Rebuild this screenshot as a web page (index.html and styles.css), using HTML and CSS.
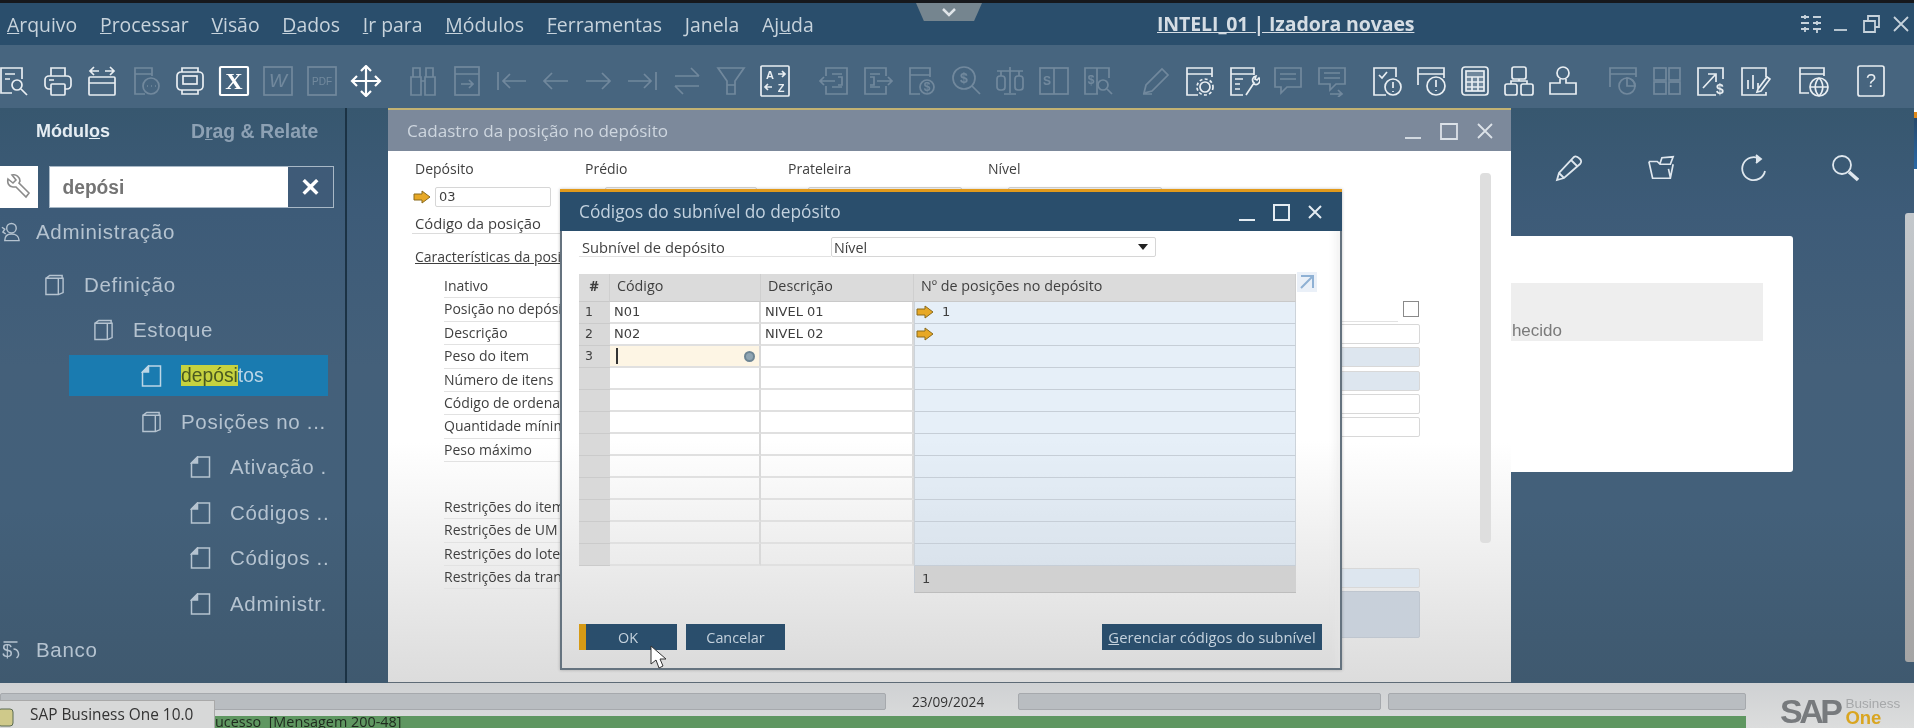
FILE: index.html
```html
<!DOCTYPE html>
<html lang="pt">
<head>
<meta charset="utf-8">
<title>SAP Business One</title>
<link rel="stylesheet" href="styles.css">
</head>
<body>
<svg class="defs" width="0" height="0" aria-hidden="true">
<defs>
<symbol id="docsearch" viewBox="0 0 32 32"><path d="M24 14V3H3v25h11M7 9h10M7 14h5"/><circle cx="19" cy="20" r="5"/><path d="M23 24l6 6"/></symbol>
<symbol id="print" viewBox="0 0 32 32"><path d="M9 11V3h14v8M9 24H7a4 4 0 0 1-4-4v-5a4 4 0 0 1 4-4h18a4 4 0 0 1 4 4v5a4 4 0 0 1-4 4h-2M7 15h5"/><rect x="9" y="19" width="14" height="11" rx="1"/></symbol>
<symbol id="calarrows" viewBox="0 0 32 32"><rect x="3" y="12" width="26" height="18" rx="1"/><path d="M3 18h26M4 6h9M8 2L4 6l4 4M28 6h-9M24 2l4 4-4 4"/></symbol>
<symbol id="docchat" viewBox="0 0 32 32"><path d="M22 11V3H5v26h10M5 9h17"/><circle cx="21" cy="21" r="8"/><path d="M17 21h1M21 21h1M25 21h1"/></symbol>
<symbol id="screen" viewBox="0 0 32 32"><rect x="3" y="7" width="26" height="18" rx="4"/><rect x="9" y="11" width="14" height="8"/><path d="M8 7V3h16v4M8 25v4h16v-4"/></symbol>
<symbol id="excel" viewBox="0 0 32 32"><rect x="2" y="2" width="28" height="28" rx="1"/><text x="16" y="24" class="st st-x">X</text></symbol>
<symbol id="word" viewBox="0 0 32 32"><rect x="2" y="2" width="28" height="28"/><text x="16" y="22" class="st st-w">W</text></symbol>
<symbol id="pdf" viewBox="0 0 32 32"><rect x="2" y="2" width="28" height="28"/><text x="16" y="20" class="st st-p">PDF</text></symbol>
<symbol id="move" viewBox="0 0 32 32"><path d="M16 1v30M2 16h28M11 6l5-5 5 5M11 26l5 5 5-5M7 11l-5 5 5 5M25 11l5 5-5 5"/></symbol>
<symbol id="binoc" viewBox="0 0 32 32"><path d="M6 3h7v9H6zM19 3h7v9h-7zM4 12h10v18H4zM18 12h10v18H18zM14 16h4"/></symbol>
<symbol id="docarrow" viewBox="0 0 32 32"><rect x="4" y="2" width="24" height="28"/><path d="M4 9h24M10 19h12M18 15l4 4-4 4"/></symbol>
<symbol id="first" viewBox="0 0 32 32"><path d="M3 7v18M8 16h23M15 9l-7 7 7 7"/></symbol>
<symbol id="prev" viewBox="0 0 32 32"><path d="M5 16h24M13 8l-8 8 8 8"/></symbol>
<symbol id="next" viewBox="0 0 32 32"><path d="M3 16h24M19 8l8 8-8 8"/></symbol>
<symbol id="last" viewBox="0 0 32 32"><path d="M29 7v18M1 16h23M17 9l7 7-7 7"/></symbol>
<symbol id="swap" viewBox="0 0 32 32"><path d="M4 11h24M20 3l8 8M28 21H4M12 29l-8-8"/></symbol>
<symbol id="funnel" viewBox="0 0 32 32"><path d="M3 3h26l-9 13v13h-8V16zM12 20h8"/></symbol>
<symbol id="sortaz" viewBox="0 0 32 32"><rect x="2" y="1" width="28" height="30" rx="1"/><text x="11" y="14" class="st st-s">A</text><text x="22" y="27" class="st st-s">Z</text><path d="M19 9h7M23 6l3 3-3 3M13 22H6M9 19l-3 3 3 3"/></symbol>
<symbol id="docleft" viewBox="0 0 32 32"><path d="M8 11V3h21v26H8v-8M14 9h10M14 22h10M2 16h15M6 12l-4 4 4 4M20 12h4v8h-4"/></symbol>
<symbol id="docright" viewBox="0 0 32 32"><path d="M24 11V3H3v26h21v-8M8 9h10M8 22h10M15 16h15M26 12l4 4-4 4M8 12h4v8H8"/></symbol>
<symbol id="docdollar" viewBox="0 0 32 32"><path d="M24 12V3H4v26h10M4 10h20"/><circle cx="21" cy="22" r="7"/><text x="21" y="26" class="st st-d">$</text></symbol>
<symbol id="coinsearch" viewBox="0 0 32 32"><circle cx="14" cy="13" r="11"/><text x="14" y="18" class="st st-c">$</text><path d="M22 21l8 8"/></symbol>
<symbol id="scales" viewBox="0 0 32 32"><path d="M3 6h26M16 2v26M10 29h12M7 6v5M25 6v5"/><rect x="3" y="11" width="8" height="14" rx="3"/><rect x="21" y="11" width="8" height="14" rx="3"/></symbol>
<symbol id="sdoc" viewBox="0 0 32 32"><rect x="2" y="3" width="28" height="26"/><path d="M16 3v26"/><text x="9" y="20" class="st st-c2">S</text></symbol>
<symbol id="ssearch" viewBox="0 0 32 32"><path d="M27 13V3H3v26h13M15 3v26"/><text x="9" y="19" class="st st-c2">$</text><circle cx="21" cy="20" r="5"/><path d="M25 24l5 5"/></symbol>
<symbol id="pencil" viewBox="0 0 32 32"><path d="M3 29h9M4 28l2-8L22 4l6 6-16 16z"/></symbol>
<symbol id="pencil2" viewBox="0 0 28 28"><path d="M2 26l2-7L19 3c2-2 5 1 6 2s2 3 0 5L9 24zM16 6l6 6M4 19l5 5"/></symbol>
<symbol id="calgear" viewBox="0 0 32 32"><path d="M28 12V3H3v27h11M3 9h25"/><circle cx="21" cy="22" r="5"/><circle cx="21" cy="22" r="8" stroke-dasharray="3 2.3"/></symbol>
<symbol id="docwrench" viewBox="0 0 32 32"><path d="M26 10V3H3v27h12M3 9h23M7 14h8M7 19h5M7 24h5M18 30l8-12a4 4 0 0 1 2-7l-1 3 2 1 2-2a4 4 0 0 1-5 6"/></symbol>
<symbol id="chat" viewBox="0 0 32 32"><path d="M3 3h26v19H15l-6 6v-6H3zM8 9h16M8 14h16"/></symbol>
<symbol id="chat2" viewBox="0 0 32 32"><path d="M3 3h26v16h-9l-6 6v-6H3zM8 8h16M8 13h16M14 29h12M22 25l4 4-4 3"/></symbol>
<symbol id="doccheck" viewBox="0 0 32 32"><path d="M25 12V3H3v27h12M8 10l3 3 5-6"/><circle cx="22" cy="22" r="8"/><path d="M22 17v6M22 26v1"/></symbol>
<symbol id="calalert" viewBox="0 0 32 32"><path d="M3 20V3h26v10M3 9h26"/><circle cx="21" cy="21" r="9"/><path d="M21 15v7M21 25v1"/></symbol>
<symbol id="calc" viewBox="0 0 32 32"><rect x="3" y="2" width="26" height="28" rx="3"/><rect x="7" y="6" width="18" height="20" fill="currentColor" fill-opacity=".25"/><path d="M7 12h18M7 17h18M7 22h18M13 12v14M19 12v14"/></symbol>
<symbol id="hier" viewBox="0 0 32 32"><rect x="9" y="2" width="14" height="12" rx="2"/><rect x="2" y="19" width="12" height="11" rx="2"/><rect x="18" y="19" width="12" height="11" rx="2"/><path d="M16 14v2H8v3M16 16h8v3"/></symbol>
<symbol id="stamp" viewBox="0 0 32 32"><circle cx="16" cy="8" r="6"/><path d="M13 14v4H3v11h26V18H19v-4"/></symbol>
<symbol id="calcircle" viewBox="0 0 32 32"><path d="M3 22V3h26v9M3 9h26"/><circle cx="20" cy="21" r="8"/><path d="M20 13a8 8 0 0 1 8 8h-8z"/></symbol>
<symbol id="grid4" viewBox="0 0 32 32"><rect x="3" y="3" width="12" height="12"/><rect x="18" y="3" width="11" height="12"/><rect x="3" y="17" width="12" height="12"/><rect x="18" y="17" width="11" height="12"/></symbol>
<symbol id="arrowdollar" viewBox="0 0 32 32"><path d="M28 14V3H3v27h18M8 23L20 10M13 9h8v8"/><text x="25" y="29" class="st st-d2">$</text></symbol>
<symbol id="chartpen" viewBox="0 0 32 32"><path d="M27 12V3H3v27h24v-3M9 24v-9M14 24V10M19 24v-6M19 24l9-12 3 2-9 12-4 1z"/></symbol>
<symbol id="calglobe" viewBox="0 0 32 32"><path d="M27 11V3H3v25h9M3 9h24"/><circle cx="22" cy="22" r="9"/><path d="M13 22h18M22 13c-5 5-5 13 0 18M22 13c5 5 5 13 0 18"/></symbol>
<symbol id="help" viewBox="0 0 32 32"><rect x="3" y="1" width="26" height="30" rx="2"/><text x="16" y="22" class="st st-h">?</text></symbol>
<symbol id="leaf" viewBox="0 0 20 22"><path d="M7 1h12v20H1V7z"/><path d="M7 1v6H1z" fill="currentColor"/></symbol>
<symbol id="book" viewBox="0 0 22 22"><path d="M2 4l4-3h13v3M2 4h13v17H2zM15 4h5v15l-5 2"/></symbol>
<symbol id="adminico" viewBox="0 0 22 22"><circle cx="12" cy="7" r="5"/><path d="M2 6l3 2-2 3 3 2M5 20c0-5 3-7 7-7s8 2 8 7z"/></symbol>
<symbol id="bankico" viewBox="0 0 18 22"><text x="6" y="18" class="st st-b">$</text><path d="M2 3h14M12 10a5 5 0 0 1 3 9"/></symbol>
<symbol id="arrow" viewBox="0 0 18 14"><path d="M1 4h8V1l8 6-8 6v-3H1z" fill="#e7a826" stroke="#8a6a1c" stroke-width="1"/></symbol>
<symbol id="wrench" viewBox="0 0 26 26"><path d="M2 5l5 4 3-3-4-5c4-1 8 2 8 6l-1 2 10 10-3 4-10-10-3 0C3 13 1 9 2 5z"/></symbol>
<symbol id="folderopen" viewBox="0 0 30 28"><path d="M2 7h9l3 3h11l3-8-12 1-2 6M2 7l4 18h19l3-15M23 15l2 9"/></symbol>
<symbol id="refresh" viewBox="0 0 28 28"><path d="M21 5a11.500 11.500 0 1 0 5 12"/><path d="M17 1l5 4-5 4" fill="currentColor"/></symbol>
<symbol id="glass" viewBox="0 0 28 28"><circle cx="11" cy="11" r="9"/><path d="M18 18l9 8" stroke-width="3.500"/></symbol>
<symbol id="cursor" viewBox="0 0 18 25"><path d="M1 1v18l5-4 3 8 4-2-3-7h6z" fill="#fff" stroke="#333" stroke-width="1"/></symbol>
</defs>
</svg>

<div class="page">
<div class="app">
  <div class="blackbar"></div>
  <header class="menubar">
    <nav class="menus">
      <span><u>A</u>rquivo</span><span><u>P</u>rocessar</span><span><u>V</u>isão</span><span><u>D</u>ados</span><span><u>I</u>r para</span><span><u>M</u>ódulos</span><span><u>F</u>erramentas</span><span><u>J</u>anela</span><span>Aj<u>u</u>da</span>
    </nav>
    <div class="company">INTELI_01 | Izadora novaes</div>
    <div class="appctl">
      <svg class="ctl" viewBox="0 0 22 20"><path d="M1 3h8M1 9h8M1 15h8M13 3h8M13 9h8M13 15h8M5 1v4M5 13v5M17 7v4M17 15v4"/></svg>
      <svg class="ctl" viewBox="0 0 22 20"><path d="M4 16h13"/></svg>
      <svg class="ctl" viewBox="0 0 22 20"><path d="M4 7h11v11H4zM8 7V2h11v11h-4"/></svg>
      <svg class="ctl" viewBox="0 0 22 20"><path d="M4 3l14 14M18 3L4 17"/></svg>
    </div>
    <div class="notch"><svg viewBox="0 0 16 10"><path d="M2 2l6 6 6-6"/></svg></div>
  </header>

  <div class="toolbar">
    <div class="tgroup">
      <svg class="ti"><use href="#docsearch"/></svg><svg class="ti"><use href="#print"/></svg><svg class="ti"><use href="#calarrows"/></svg><svg class="ti dim"><use href="#docchat"/></svg><svg class="ti"><use href="#screen"/></svg><svg class="ti hi"><use href="#excel"/></svg><svg class="ti dim"><use href="#word"/></svg><svg class="ti dim"><use href="#pdf"/></svg><svg class="ti hi"><use href="#move"/></svg>
    </div>
    <div class="tgroup g2">
      <svg class="ti dim"><use href="#binoc"/></svg><svg class="ti dim"><use href="#docarrow"/></svg><svg class="ti dim"><use href="#first"/></svg><svg class="ti dim"><use href="#prev"/></svg><svg class="ti dim"><use href="#next"/></svg><svg class="ti dim"><use href="#last"/></svg><svg class="ti dim"><use href="#swap"/></svg><svg class="ti dim"><use href="#funnel"/></svg><svg class="ti"><use href="#sortaz"/></svg>
    </div>
    <div class="tgroup g3">
      <svg class="ti dim"><use href="#docleft"/></svg><svg class="ti dim"><use href="#docright"/></svg><svg class="ti dim"><use href="#docdollar"/></svg><svg class="ti dim"><use href="#coinsearch"/></svg><svg class="ti dim"><use href="#scales"/></svg><svg class="ti dim"><use href="#sdoc"/></svg><svg class="ti dim"><use href="#ssearch"/></svg>
    </div>
    <div class="tgroup g4">
      <svg class="ti dim"><use href="#pencil"/></svg><svg class="ti"><use href="#calgear"/></svg><svg class="ti"><use href="#docwrench"/></svg><svg class="ti dim"><use href="#chat"/></svg><svg class="ti dim"><use href="#chat2"/></svg>
    </div>
    <div class="tgroup g5">
      <svg class="ti"><use href="#doccheck"/></svg><svg class="ti"><use href="#calalert"/></svg><svg class="ti"><use href="#calc"/></svg><svg class="ti"><use href="#hier"/></svg><svg class="ti"><use href="#stamp"/></svg>
    </div>
    <div class="tgroup g6">
      <svg class="ti dim"><use href="#calcircle"/></svg><svg class="ti dim"><use href="#grid4"/></svg><svg class="ti"><use href="#arrowdollar"/></svg><svg class="ti"><use href="#chartpen"/></svg>
    </div>
    <div class="tgroup g7"><svg class="ti"><use href="#calglobe"/></svg></div>
    <div class="tgroup g7"><svg class="ti"><use href="#help"/></svg></div>
  </div>

  <div class="main">
    <aside class="sidebar">
      <div class="tabs"><span class="tab-on">Módul<u>o</u>s</span><span class="tab-off">D<u>r</u>ag &amp; Relate</span></div>
      <div class="searchrow">
        <div class="wrenchbox"><svg><use href="#wrench"/></svg></div>
        <div class="searchbox"><span class="searchtext">depósi</span><span class="searchx">✕</span></div>
      </div>
      <ul class="tree">
        <li class="node l0 first"><svg class="nico"><use href="#adminico"/></svg><span>Administração</span></li>
        <li class="node l1"><svg class="nico"><use href="#book"/></svg><span>Definição</span></li>
        <li class="node l2"><svg class="nico"><use href="#book"/></svg><span>Estoque</span></li>
        <li class="node l3 sel"><svg class="nico"><use href="#leaf"/></svg><span><mark>depósi</mark>tos</span></li>
        <li class="node l3"><svg class="nico"><use href="#book"/></svg><span>Posições no ...</span></li>
        <li class="node l4"><svg class="nico"><use href="#leaf"/></svg><span>Ativação .</span></li>
        <li class="node l4"><svg class="nico"><use href="#leaf"/></svg><span>Códigos ..</span></li>
        <li class="node l4"><svg class="nico"><use href="#leaf"/></svg><span>Códigos ..</span></li>
        <li class="node l4"><svg class="nico"><use href="#leaf"/></svg><span>Administr.</span></li>
        <li class="node l0"><svg class="nico"><use href="#bankico"/></svg><span>Banco</span></li>
      </ul>
    </aside>
    <div class="divider"></div>
    <div class="workspace">
      <div class="tools">
        <svg><use href="#pencil2"/></svg><svg><use href="#folderopen"/></svg><svg><use href="#refresh"/></svg><svg><use href="#glass"/></svg>
      </div>
      <div class="card"><div class="band"><span>Desconhecido</span></div></div>
      <div class="mainscroll"></div>

      <section class="win">
        <div class="wintitle">
          <span>Cadastro da posição no depósito</span>
          <div class="winctl">
            <svg viewBox="0 0 20 20"><path d="M2 17h16"/></svg>
            <svg viewBox="0 0 20 20"><path d="M2 3h16v15H2z"/></svg>
            <svg viewBox="0 0 20 20"><path d="M3 3l14 14M17 3L3 17"/></svg>
          </div>
        </div>
        <div class="winbody">
          <div class="headgrid">
            <span>Depósito</span><span>Prédio</span><span>Prateleira</span><span>Nível</span>
            <div class="hcell"><svg class="arrow"><use href="#arrow"/></svg><div class="field w116">03</div></div>
            <div class="hcell"><div class="field w152"></div></div>
            <div class="hcell"><div class="field w154"></div></div>
            <div class="hcell"><div class="field w154"></div></div>
          </div>
          <div class="codrow">Código da posição</div>
          <div class="charrow">Características da posição</div>
          <div class="rows">
            <div class="row"><span>Inativo</span></div>
            <div class="row line"><span>Posição no depósito</span><div class="check"></div></div>
            <div class="row"><span>Descrição</span><div class="val"></div></div>
            <div class="row"><span>Peso do item</span><div class="val blue"></div></div>
            <div class="row"><span>Número de itens</span><div class="val blue"></div></div>
            <div class="row"><span>Código de ordenação</span><div class="val"></div></div>
            <div class="row"><span>Quantidade mínima</span><div class="val"></div></div>
            <div class="row"><span>Peso máximo</span></div>
            <div class="rowgap"></div>
            <div class="row"><span>Restrições do item</span></div>
            <div class="row"><span>Restrições de UM</span></div>
            <div class="row"><span>Restrições do lote</span></div>
            <div class="row"><span>Restrições da transação</span><div class="val blue"></div></div>
            <div class="area"></div>
          </div>
          <div class="winscroll"></div>
        </div>
      </section>

      <section class="dlg">
        <div class="dlgtitle">
          <span>Códigos do subnível do depósito</span>
          <div class="dlgctl">
            <svg viewBox="0 0 20 20"><path d="M2 18h16"/></svg>
            <svg viewBox="0 0 20 20"><path d="M3 3h15v15H3z"/></svg>
            <svg viewBox="0 0 20 20"><path d="M4 4l12 12M16 4L4 16"/></svg>
          </div>
        </div>
        <div class="dlgbody">
          <div class="subrow"><span class="sublabel">Subnível de depósito</span><div class="select"><span>Nível</span><i class="caret"></i></div></div>
          <div class="gridwrap">
            <div class="grid">
              <div class="hd ctr">#</div><div class="hd">Código</div><div class="hd">Descrição</div><div class="hd">Nº de posições no depósito</div>
              <div class="num">1</div><div class="c">N01</div><div class="c">NIVEL 01</div><div class="c b"><svg class="arrow inrow"><use href="#arrow"/></svg>1</div>
              <div class="num">2</div><div class="c">N02</div><div class="c">NIVEL 02</div><div class="c b"><svg class="arrow inrow"><use href="#arrow"/></svg></div>
              <div class="num">3</div><div class="c active"><i class="textcaret"></i><i class="lookup"></i></div><div class="c"></div><div class="c b"></div>
              <div class="num"></div><div class="c"></div><div class="c"></div><div class="c b"></div>
              <div class="num"></div><div class="c"></div><div class="c"></div><div class="c b"></div>
              <div class="num"></div><div class="c"></div><div class="c"></div><div class="c b"></div>
              <div class="num"></div><div class="c"></div><div class="c"></div><div class="c b"></div>
              <div class="num"></div><div class="c"></div><div class="c"></div><div class="c b"></div>
              <div class="num"></div><div class="c"></div><div class="c"></div><div class="c b"></div>
              <div class="num"></div><div class="c"></div><div class="c"></div><div class="c b"></div>
              <div class="num"></div><div class="c"></div><div class="c"></div><div class="c b"></div>
              <div class="num"></div><div class="c"></div><div class="c"></div><div class="c b"></div>
              <div class="foot">1</div>
            </div>
            <svg class="expand" viewBox="0 0 20 20"><path d="M4 4h12v12M16 4L4 16"/></svg>
          </div>
          <div class="btnrow">
            <button class="btn ok">OK</button>
            <button class="btn cancel">Cancelar</button>
            <button class="btn manage"><u>G</u>erenciar códigos do subnível</button>
          </div>
          <svg class="cursor"><use href="#cursor"/></svg>
        </div>
      </section>
    </div>
  </div>

  <footer class="status">
    <div class="statusleft">
      <div class="fields">
        <div class="sf s1"></div><div class="date">23/09/2024</div><div class="sf s2"></div><div class="sf s3"></div>
      </div>
      <div class="greenbar">ucesso&nbsp; [Mensagem 200-48]</div>
    </div>
    <div class="logo"><span class="sap">SAP</span><div class="bo"><span>Business</span><b>One</b></div></div>
    <div class="taskbtn"><svg viewBox="0 0 16 20"><rect x="-2" y="2" width="15" height="17" rx="3" fill="#cfc98a" stroke="#5a6a50"/></svg><span>SAP Business One 10.0</span></div>
  </footer>
</div>
<div class="edge"><i></i></div>
</div>
</body>
</html>
```

FILE: styles.css
```css
* { box-sizing: border-box; }
html, body { margin: 0; height: 100%; overflow: hidden; background: #fff; }
body { font-family: "Open Sans", sans-serif; }
.defs { position: absolute; }
svg { fill: none; stroke: currentColor; stroke-width: 1.8; display: block; }
.st { stroke: none; fill: currentColor; text-anchor: middle; font-family: "Liberation Sans", sans-serif; font-weight: 700; }
.st-x { font-family: "Liberation Serif", serif; font-size: 24px; }
.st-w { font-size: 19px; font-style: italic; font-weight: 400; }
.st-p { font-size: 10px; font-weight: 400; }
.st-s { font-size: 11px; }
.st-d { font-size: 12px; }
.st-c { font-size: 14px; }
.st-c2 { font-size: 12px; }
.st-d2 { font-size: 14px; }
.st-h { font-size: 18px; font-weight: 400; }
.st-b { font-size: 18px; font-weight: 400; }

.page { display: flex; width: 1919px; height: 728px; filter: blur(.45px); }
.app { width: 1914px; height: 728px; display: flex; flex-direction: column; position: relative; }
.edge { width: 5px; background: #fff; }
.edge i { display: block; height: 57px; margin-top: 112px; background: linear-gradient(#e08a1a 0 6px, #27496b 6px, #2a6aa8 100%); width: 3px; }

.blackbar { height: 3px; flex: none; background: #16181c; }
.menubar { height: 42px; flex: none; background: #2a4e6c; display: grid; grid-template-columns: 1157px auto 1fr; align-items: center; color: #c7d3dc; position: relative; }
.menus { display: flex; gap: 22.8px; padding-left: 7px; font-size: 19.4px; }
.company { font-size: 19.5px; font-weight: 700; color: #d5dde4; text-decoration: underline; padding-bottom: 2px; letter-spacing: -.1px; }
.appctl { display: flex; justify-content: flex-end; gap: 8px; padding-right: 2px; color: #c6d2db; }
.ctl { width: 22px; height: 20px; }
.notch { position: absolute; left: 916px; top: 0; width: 66px; height: 18px; background: #75858f; clip-path: polygon(0 0, 100% 0, 88% 100%, 12% 100%); display: flex; justify-content: center; align-items: center; color: #dfe4e8; }
.notch svg { width: 16px; height: 10px; stroke-width: 2.5; }

.toolbar { height: 63px; flex: none; background: #47657f; display: flex; align-items: center; padding-top: 9px; margin-left: -8px; color: #e9eef2; }
.tgroup { display: flex; flex: none; }
.g2 { margin-left: 13px; }
.g3 { margin-left: 15px; }
.g4 { margin-left: 14px; }
.g5 { margin-left: 11px; }
.g6 { margin-left: 16px; }
.g7 { margin-left: 14px; }
.ti { width: 32px; height: 32px; margin: 0 6px; flex: none; stroke-width: 1.7; }
.ti.dim { opacity: .26; }
.ti.hi { color: #fff; stroke-width: 2.2; }

.main { height: 575px; flex: none; display: flex; background: linear-gradient(#37576f 0, #3d5b78 18%, #44607a 45%, #43607a 70%, #3f596f 100%); }
.sidebar { width: 345px; flex: none; font-family: "Liberation Sans", sans-serif; color: #b5c3d0; }
.divider { width: 2px; background: #1b3244; }
.workspace { flex: 1; position: relative; }

.tabs { height: 57.5px; display: flex; align-items: center; padding-bottom: 11px; }
.tab-on { margin-left: 36px; width: 155px; font-size: 18px; font-weight: 700; color: #e5edf3; }
.tab-off { font-size: 19.4px; font-weight: 700; color: #8da1b4; }
.searchrow { display: flex; height: 42px; }
.wrenchbox { width: 38px; background: #fff; display: flex; align-items: center; justify-content: center; color: #8b8b8b; }
.wrenchbox svg { width: 26px; height: 26px; stroke-width: 1.6; }
.searchbox { margin-left: 11px; width: 285px; display: flex; border: 1px solid #a8b8c6; background: #fff; }
.searchtext { width: 239px; padding-left: 13px; line-height: 40px; font-size: 20px; color: #747474; font-weight: 700; transform: scaleX(.96); transform-origin: left; }
.searchx { width: 45px; background: #3f5b78; color: #fff; font-size: 25px; font-weight: 700; text-align: center; line-height: 40px; }
.tree { list-style: none; margin: 1.5px 0 0; padding: 0; }
.node { height: 45.6px; display: flex; align-items: center; font-size: 20.5px; letter-spacing: .7px; }
.node.first { margin-bottom: 7.4px; }
.nico { width: 21px; height: 22px; flex: none; stroke-width: 1.5; }
.l0 { padding-left: 0; }
.l0 .nico { margin-right: 15px; }
.l1 { padding-left: 44px; }
.l2 { padding-left: 93px; }
.l3 { padding-left: 141px; }
.l4 { padding-left: 190px; }
.l1 .nico, .l2 .nico, .l3 .nico { margin-right: 19px; }
.l4 .nico { margin-right: 19px; }
.sel { background: #1a7bb0; margin-left: 69px; padding-left: 72px; width: 259px; height: 41px; margin-top: 2.3px; margin-bottom: 2.3px; color: #bcd6e6; font-size: 19.3px; letter-spacing: 0; }
mark { background: #c6d23f; color: #4a5a20; }

.tools { position: absolute; left: 1208px; top: 46px; display: flex; gap: 64px; color: #dfe7ee; }
.tools svg { width: 28px; height: 28px; stroke-width: 1.8; }
.card { position: absolute; left: 1000px; top: 128px; width: 446px; height: 236px; background: #fff; border-radius: 3px; padding: 47px 30px 0 0; }
.band { height: 58px; background: #eeeeee; display: flex; align-items: flex-end; justify-content: flex-end; padding: 0 201px 0 0; font-family: "Liberation Sans", sans-serif; font-size: 17px; color: #7a7a7a; }
.mainscroll { position: absolute; right: 0; top: 105px; width: 9px; height: 449px; background: linear-gradient(#c3c8cc, #b0acae 60%, #a5a5a5); border-radius: 3px 0 0 3px; }

.win { position: absolute; left: 41px; top: 0; width: 1123px; height: 575px; border-top: 2px solid #c2b273; display: flex; flex-direction: column; color: #3f3f3f; }
.wintitle { height: 41px; flex: none; background: #7c899b; color: #ced6df; display: flex; justify-content: space-between; align-items: center; padding: 0 16px 0 19px; font-size: 17.1px; }
.winctl { display: flex; gap: 16px; color: #dce2e8; }
.winctl svg { width: 20px; height: 20px; }
.winbody { flex: 1; position: relative; background: linear-gradient(#fff 0, #fff 55%, #dcdcdc 100%); padding: 8px 0 0 27px; font-size: 14px; border-bottom: 1px solid #5d6a76; }
.headgrid { display: grid; grid-template-columns: 170px 203px 200px 200px; row-gap: 8px; }
.headgrid > span { height: 20px; line-height: 20px; }
.hcell { display: flex; align-items: center; padding-left: 20px; height: 20px; position: relative; }
.arrow { width: 18px; height: 14px; position: absolute; left: -2px; top: 3px; }
.field { height: 20px; border: 1px solid #d6d6d6; border-radius: 2px; background: #fff; padding-left: 3px; line-height: 18px; font-size: 13px; font-family: "DejaVu Sans", sans-serif; }
.w116 { width: 116px; }
.w152 { width: 152px; }
.w154 { width: 154px; }
.codrow { margin: 7px 0 0 -3px; height: 20px; line-height: 19px; border-bottom: 1px solid #dcdcdc; width: 300px; padding-left: 3px; font-size: 14.8px; }
.charrow { margin-top: 13px; height: 20px; line-height: 20px; text-decoration: underline; }
.rows { margin: 8px 0 0 29px; width: 976px; }
.row { height: 23.4px; position: relative; }
.row > span { display: block; width: 300px; height: 23.4px; line-height: 22px; border-bottom: 1px solid #e2e2e2; white-space: nowrap; }
.row.line { border-bottom: 1px solid #e2e2e2; width: 954px; }
.rowgap { height: 33.8px; }
.val { position: absolute; right: 0; top: 2px; width: 300px; height: 20px; background: #fff; border: 1px solid #d8d8d8; border-radius: 2px; }
.val.blue { background: #dde6ef; }
.row .check { position: absolute; left: 959px; top: 3px; width: 16px; height: 16px; background: #fff; border: 1.5px solid #8a8a8a; }
.area { margin-left: auto; margin-top: 2px; width: 300px; height: 47px; background: #c8d0da; border: 1px solid #bfc6cf; border-radius: 2px; }
.winscroll { position: absolute; right: 20px; top: 22px; width: 11px; height: 370px; background: #dedede; border-radius: 4px; }

.dlg { position: absolute; left: 213px; top: 81px; width: 782px; height: 481px; border-top: 3px solid #e29a1b; display: flex; flex-direction: column; color: #3f3f3f; box-shadow: 0 0 3px rgba(0,0,0,.25); }
.dlgtitle { height: 39px; flex: none; background: #2a4e6c; color: #c3d2df; display: flex; justify-content: space-between; align-items: center; padding: 0 17px 0 19px; font-size: 17.3px; }
.dlgctl { display: flex; gap: 14px; color: #e4ecf2; }
.dlgctl svg { width: 20px; height: 20px; stroke-width: 2; }
.dlgbody { flex: 1; position: relative; background: linear-gradient(#fff 0, #fff 48%, #dbdbdb 100%); border: 2px solid #65737f; border-top: 0; padding: 6px 18px 0 17px; font-size: 14.3px; box-shadow: inset -14px 0 8px -10px rgba(230,230,230,.6); }
.subrow { display: flex; height: 20px; }
.sublabel { width: 252px; line-height: 20px; border-bottom: 1px solid #e2e2e2; font-size: 14.7px; padding-left: 3px; white-space: nowrap; }
.select { width: 325px; height: 20px; border: 1px solid #d6d6d6; border-radius: 2px; padding: 0 7px 0 2px; display: flex; justify-content: space-between; align-items: center; background: #fff; }
.caret { width: 0; height: 0; border: 5px solid transparent; border-top: 6px solid #222; border-bottom: 0; }
.gridwrap { display: flex; margin-top: 17px; gap: 1px; }
.grid { display: grid; grid-template-columns: 31px 151px 153px 382px; grid-template-rows: 28px repeat(12, 22px) 27px; }
.hd { background: #dbdbdb; padding-left: 7px; line-height: 24px; border-right: 1px solid #cfcfcf; border-bottom: 1px solid #c9c9c9; white-space: nowrap; }
.hd.ctr { padding-left: 0; text-align: center; font-weight: 700; }
.num { background: #d9d9d9; padding-left: 6px; border-bottom: 1px solid #cbcbcb; font: 12.5px/20px "DejaVu Sans", sans-serif; }
.c { padding-left: 4px; border-right: 2px solid #d9d9d9; border-bottom: 2px solid #e0e0e0; font: 13px/20px "DejaVu Sans", sans-serif; position: relative; }
.c.b { background: rgba(190, 214, 236, .38); border-right: 1px solid #ccd3da; border-bottom: 1px solid #c6ced7; border-left: 1px solid #ccd3da; padding-left: 27px; }
.arrow.inrow { left: 1px; top: 3px; }
.active { background: #fdf5e4; }
.textcaret { position: absolute; left: 6px; top: 2px; width: 2px; height: 16px; background: #333; }
.lookup { position: absolute; right: 4px; top: 5px; width: 11px; height: 11px; border-radius: 50%; background: #8fa5b3; border: 2px solid #6d8594; }
.foot { grid-column: 4; background: #d1d1d1; padding-left: 7px; font: 13px/25px "DejaVu Sans", sans-serif; border-bottom: 1px solid #bdbdbd; border-left: 1px solid #c5ccd4; }
.expand { width: 20px; height: 20px; margin-top: -2px; background: #eaf0f8; color: #8fb1d4; stroke-width: 2; }
.btnrow { display: flex; margin-top: 31px; gap: 9px; }
.btn { height: 26px; border: 0; background: #2a4e6c; color: #c5d2dd; font-family: "Open Sans", sans-serif; font-size: 14.4px; padding: 0; }
.ok { width: 98px; border-left: 7px solid #d69a15; padding-right: 7px; }
.cancel { width: 99px; }
.manage { margin-left: auto; width: 220px; font-size: 14.8px; white-space: nowrap; }
.cursor { position: absolute; left: 88px; top: 414px; width: 18px; height: 25px; }

.status { height: 45px; flex: none; display: flex; background: linear-gradient(#cfd1d3, #dcdddd); position: relative; overflow: hidden; }
.statusleft { width: 1746px; flex: none; display: flex; flex-direction: column; }
.fields { display: flex; margin-top: 10px; height: 17px; flex: none; align-items: stretch; }
.sf { background: #b9bdc1; border: 1px solid #a6a9ad; border-radius: 2px; }
.s1 { width: 886px; }
.date { width: 132px; padding-left: 26px; font-size: 13.6px; line-height: 17px; color: #333; }
.s2 { width: 363px; }
.s3 { width: 358px; margin-left: 7px; }
.greenbar { margin: 6px 0 0 215px; height: 12px; background: #5f9761; font-size: 14.4px; color: #1e2a1e; line-height: 12px; white-space: nowrap; overflow: hidden; }
.logo { display: flex; margin-left: 34px; margin-top: 11px; font-family: "Liberation Sans", sans-serif; font-weight: 700; height: 34px; }
.sap { font-size: 34px; line-height: 34px; color: #777a7d; letter-spacing: -3.5px; margin-right: 6px; }
.bo { display: flex; flex-direction: column; font-size: 13.5px; line-height: 12px; color: #a6a8aa; font-weight: 400; padding-top: 4px; }
.bo b { font-size: 18.5px; line-height: 15px; color: #d9a520; }
.taskbtn { position: absolute; left: 0; bottom: 0; width: 215px; height: 28px; background: #d7d8d8; border-top: 1px solid #a9a9a9; border-right: 1px solid #a9a9a9; display: flex; align-items: center; font-size: 15.4px; color: #333; }
.taskbtn svg { width: 16px; height: 20px; margin: 4px 14px 0 0; stroke-width: 1; }
```
